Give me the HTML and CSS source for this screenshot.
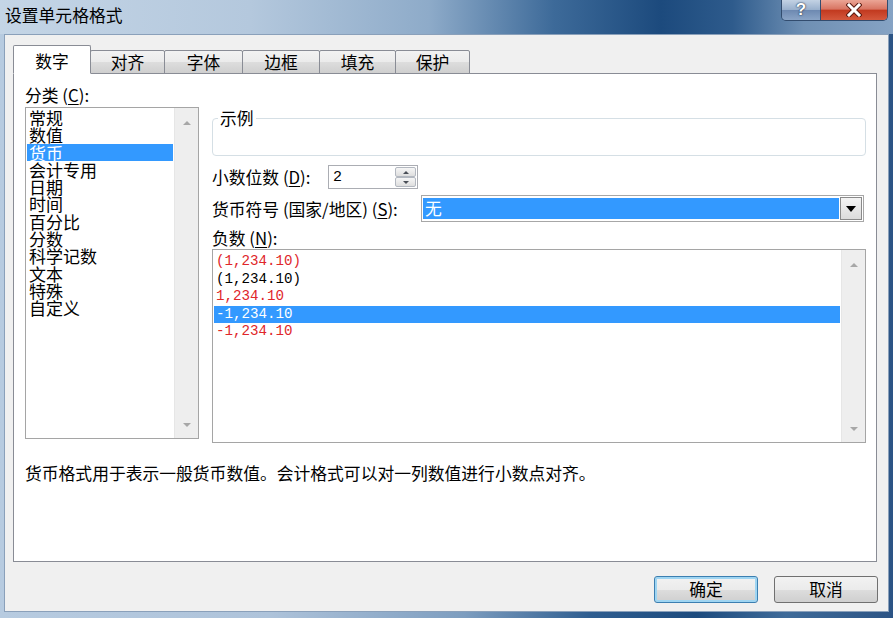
FILE: index.html
```html
<!DOCTYPE html>
<html lang="zh-CN">

<head>
    <meta charset="UTF-8" />
    <title>设置单元格格式</title>
    <link rel="stylesheet" href="styles.css">
</head>

<body>
    <div class="window">
        <!-- Title bar -->
        <div class="titlebar">
            <span class="title">设置单元格格式</span>
            <div class="caption-buttons">
                <div class="cap-btn help">?</div>
                <div class="cap-btn close">
                    <svg width="16" height="14" viewBox="0 0 16 14">
                        <path d="M3 2 L13 12 M13 2 L3 12" stroke="#5a1a10" stroke-width="5" stroke-linecap="square" />
                        <path d="M3 2 L13 12 M13 2 L3 12" stroke="#ffffff" stroke-width="3" stroke-linecap="square" />
                    </svg>
                </div>
            </div>
        </div>

        <div class="client">
            <div class="tabs">
                <div class="tab active" style="width: 78px">数字</div>
                <div class="tab" style="width: 75px">对齐</div>
                <div class="tab" style="width: 79px">字体</div>
                <div class="tab" style="width: 78px">边框</div>
                <div class="tab" style="width: 77px">填充</div>
                <div class="tab" style="width: 75px">保护</div>
            </div>

            <div class="panel">
                <div class="panel-main">
                    <!-- Category column -->
                    <div class="col-left">
                        <div class="label">分类 (<u>C</u>):</div>
                        <div class="listbox category">
                            <ul class="items">
                                <li>常规</li>
                                <li>数值</li>
                                <li class="selected">货币</li>
                                <li>会计专用</li>
                                <li>日期</li>
                                <li>时间</li>
                                <li>百分比</li>
                                <li>分数</li>
                                <li>科学记数</li>
                                <li>文本</li>
                                <li>特殊</li>
                                <li>自定义</li>
                            </ul>
                            <div class="vscroll">
                                <span class="arrow up"></span>
                                <span class="arrow down"></span>
                            </div>
                        </div>
                    </div>

                    <!-- Options column -->
                    <div class="col-right">
                        <fieldset class="sample">
                            <legend>示例</legend>
                        </fieldset>

                        <div class="field-row decimals">
                            <span class="field-label">小数位数 (<u>D</u>):</span>
                            <div class="spinner">
                                <span class="spin-value">2</span>
                                <div class="spin-buttons">
                                    <span class="spin-btn"><i class="tri-up"></i></span>
                                    <span class="spin-btn"><i class="tri-down"></i></span>
                                </div>
                            </div>
                        </div>

                        <div class="field-row currency">
                            <span class="field-label wide">货币符号 (国家/地区) (<u>S</u>):</span>
                            <div class="combo">
                                <span class="combo-value">无</span>
                                <span class="combo-btn"><i class="tri-down big"></i></span>
                            </div>
                        </div>

                        <div class="label neg-label">负数 (<u>N</u>):</div>
                        <div class="listbox negatives">
                            <ul class="items mono">
                                <li class="red">(1,234.10)</li>
                                <li>(1,234.10)</li>
                                <li class="red">1,234.10</li>
                                <li class="selected">-1,234.10</li>
                                <li class="red">-1,234.10</li>
                            </ul>
                            <div class="vscroll">
                                <span class="arrow up"></span>
                                <span class="arrow down"></span>
                            </div>
                        </div>
                    </div>
                </div>

                <p class="desc">货币格式用于表示一般货币数值。会计格式可以对一列数值进行小数点对齐。</p>
            </div>

            <div class="buttons">
                <button class="btn default">确定</button>
                <button class="btn">取消</button>
            </div>
        </div>
    </div>
</body>

</html>
```

FILE: styles.css
```css
* {
    box-sizing: border-box;
}

body {
    margin: 0;
    width: 893px;
    height: 618px;
    overflow: hidden;
    font-family: "Noto Sans CJK SC", "Liberation Sans", sans-serif;
    font-size: 16.8px;
    color: #000;
}

u {
    text-decoration: underline;
    text-underline-offset: 2px;
}

/* Window frame */
.window {
    width: 893px;
    height: 618px;
    display: flex;
    flex-direction: column;
    padding: 0 4px 6px 4px;
    background: linear-gradient(to right, #b7cbe0 0%, #aec3da 30%, #7d9dbf 52%, #2f5e90 66%, #1d4b7e 78%, #3f6b99 88%, #2c5485 100%);
}

.titlebar {
    height: 34px;
    margin: 0 -4px;
    padding-left: 5px;
    display: flex;
    justify-content: space-between;
    align-items: flex-start;
    background: linear-gradient(to right, #c4d5e6 0%, #b4c8dd 28%, #8eabc9 48%, #3d6a99 62%, #1c4a7d 74%, #2e5b8c 82%, #6f90b4 90%, #86a3c4 100%);
}

.title {
    line-height: 30px;
    font-size: 16.8px;
    color: #000;
}

.caption-buttons {
    display: flex;
    margin-right: 5px;
    border: 1px solid #324c6e;
    border-top: none;
    border-radius: 0 0 5px 5px;
    overflow: hidden;
}

.cap-btn {
    height: 20px;
    display: flex;
    align-items: center;
    justify-content: center;
}

.help {
    width: 39px;
    border-right: 1px solid #324c6e;
    background: linear-gradient(#c3d2e4 0%, #98afcc 50%, #6d89b1 51%, #8aa4c6 100%);
    color: #fff;
    font-family: "Liberation Sans", sans-serif;
    font-weight: bold;
    font-size: 17px;
    text-shadow: 0 0 2px #1c2f4a, 0 0 1px #1c2f4a;
}

.close {
    width: 66px;
    background: linear-gradient(#eba595 0%, #d87563 45%, #c23a20 52%, #d4583d 100%);
}

/* Client area */
.client {
    flex: 1;
    background: #f0f0f0;
    border: 1px solid #8aa0ba;
    padding: 10px 11px 0 8px;
    display: flex;
    flex-direction: column;
}

.tabs {
    display: flex;
    align-items: flex-end;
    height: 29px;
    margin-bottom: -1px;
    position: relative;
    z-index: 1;
}

.tab {
    height: 24px;
    margin-right: -1px;
    border: 1px solid #898c95;
    border-radius: 2px 2px 0 0;
    background: linear-gradient(#f2f2f2 0%, #ebebeb 50%, #dddddd 51%, #cfcfcf 100%);
    text-align: center;
    line-height: 22px;
}

.tab.active {
    height: 29px;
    padding-top: 4px;
    background: #fff;
    border-bottom-color: #fff;
    position: relative;
    z-index: 2;
}

.panel {
    height: 489px;
    border: 1px solid #898c95;
    background: #fff;
    padding: 12px 10px 0 11px;
}

.panel-main {
    display: flex;
    gap: 13px;
}

.col-left {
    width: 174px;
}

.col-right {
    width: 654px;
    padding-top: 24px;
}

.label {
    line-height: 19px;
    height: 21px;
}

/* List boxes */
.listbox {
    display: flex;
    border: 1px solid #a5a5a5;
    background: #fff;
}

.listbox.category {
    height: 332px;
}

.listbox.negatives {
    height: 194px;
    margin-top: 2px;
}

.items {
    list-style: none;
    margin: 0 1px 0 1px;
    padding: 1px 0 0 0;
    flex: 1;
}

.category .items li {
    line-height: 17px;
    height: 17.3px;
    padding-left: 2px;
    font-size: 17px;
}

.items li.selected {
    background: #3399ff;
    color: #fff;
}

.items.mono {
    padding-top: 3px;
}

.items.mono li {
    font-family: "Liberation Mono", monospace;
    font-size: 14.2px;
    line-height: 17.5px;
    height: 17.5px;
    padding-left: 2px;
}

.items li.red {
    color: #e0262a;
}

.vscroll {
    width: 24px;
    background: #eeeeee;
    border-left: 1px solid #e6e6e6;
    display: flex;
    flex-direction: column;
    justify-content: space-between;
    align-items: center;
    padding: 13px 0 11px;
}

.arrow {
    width: 0;
    height: 0;
    border-left: 4px solid transparent;
    border-right: 4px solid transparent;
}

.arrow.up {
    border-bottom: 4px solid #a7a7a7;
}

.arrow.down {
    border-top: 4px solid #a7a7a7;
}

/* Sample group */
.sample {
    margin: 0;
    padding: 0;
    height: 46px;
    border: 1px solid #d5dfe5;
    border-radius: 4px;
}

.sample legend {
    margin-left: 5px;
    padding: 0 2px;
    line-height: 17px;
}

/* Field rows */
.field-row {
    display: flex;
    align-items: center;
}

.field-row.decimals {
    margin-top: 9px;
    height: 24px;
}

.field-row.currency {
    margin-top: 6px;
    height: 27px;
}

.field-label {
    width: 116px;
    white-space: nowrap;
}

.field-label.wide {
    width: 209px;
}

.spinner {
    width: 90px;
    height: 24px;
    border: 1px solid #abadb3;
    display: flex;
    align-items: center;
    padding: 1px 1px 1px 4px;
}

.spin-value {
    flex: 1;
    font-family: "Liberation Mono", monospace;
    font-size: 15px;
}

.spin-buttons {
    width: 21px;
    height: 20px;
    display: flex;
    flex-direction: column;
}

.spin-btn {
    flex: 1;
    border: 1px solid #b3b8c0;
    border-radius: 2px;
    background: linear-gradient(#f6f6f6, #dedede);
    display: flex;
    align-items: center;
    justify-content: center;
}

.tri-up,
.tri-down {
    width: 0;
    height: 0;
    border-left: 3px solid transparent;
    border-right: 3px solid transparent;
}

.tri-up {
    border-bottom: 3px solid #4a4f57;
}

.tri-down {
    border-top: 3px solid #4a4f57;
}

.tri-down.big {
    border-left-width: 5px;
    border-right-width: 5px;
    border-top: 6px solid #000;
}

.combo {
    width: 443px;
    height: 27px;
    border: 1px solid #a7a7a7;
    display: flex;
    padding: 1px;
}

.combo-value {
    flex: 1;
    margin: 1px 1px 1px 0;
    background: #3399ff;
    color: #fff;
    line-height: 21px;
    padding-left: 2px;
}

.combo-btn {
    width: 22px;
    border: 1px solid #8a8a8a;
    background: linear-gradient(#f4f4f4, #dcdcdc);
    display: flex;
    align-items: center;
    justify-content: center;
}

.neg-label {
    margin-top: 8px;
    line-height: 17px;
    height: 17px;
}

.desc {
    margin: 22px 0 0;
    line-height: 17px;
}

/* Dialog buttons */
.buttons {
    display: flex;
    justify-content: flex-end;
    gap: 16px;
    margin-top: 14px;
    margin-right: -1px;
}

.btn {
    width: 104px;
    height: 27px;
    border: 1px solid #707070;
    border-radius: 3px;
    background: linear-gradient(#f2f2f2 0%, #ebebeb 50%, #dddddd 51%, #cfcfcf 100%);
    font-family: inherit;
    font-size: 16.8px;
    line-height: 23px;
    padding: 0;
    color: #000;
}

.btn.default {
    border-color: #3c7fb1;
    box-shadow: inset 0 0 0 2px #9fd5f2;
}
```
